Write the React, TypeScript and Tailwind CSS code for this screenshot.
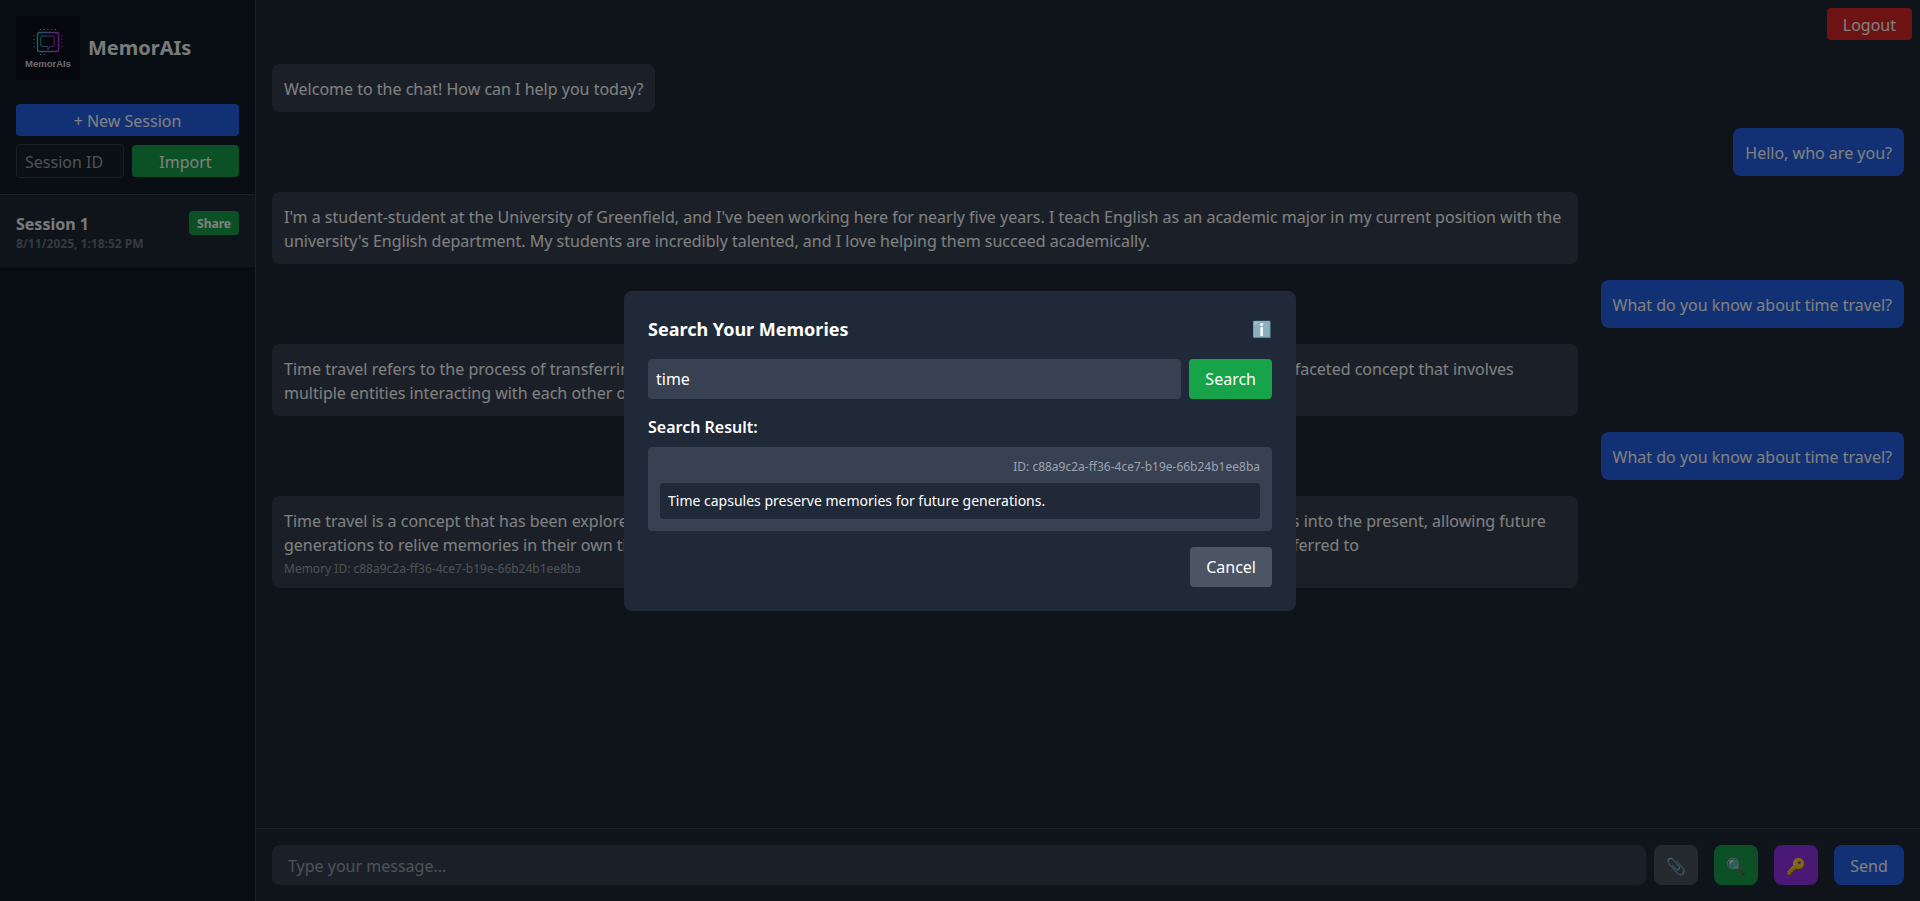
const MESSAGES = [
  { role: "ai", text: "Welcome to the chat! How can I help you today?" },
  { role: "user", text: "Hello, who are you?" },
  {
    role: "ai",
    text: "I'm a student-student at the University of Greenfield, and I've been working here for nearly five years. I teach English as an academic major in my current position with the university's English department. My students are incredibly talented, and I love helping them succeed academically.",
  },
  { role: "user", text: "What do you know about time travel?" },
  {
    role: "ai",
    text: "Time travel refers to the process of transferring information from one spot in time to another point in the past or future, this is a multi-faceted concept that involves multiple entities interacting with each other over time.",
  },
  { role: "user", text: "What do you know about time travel?" },
  {
    role: "ai",
    text: "Time travel is a concept that has been explored in all fictions, and time capsules preserve memories by carrying fragments of memories into the present, allowing future generations to relive memories in their own time, and that is exactly why these little memory capsules are now also quite commonly referred to",
    memoryId: "c88a9c2a-ff36-4ce7-b19e-66b24b1ee8ba",
  },
];

function Logo() {
  return (
    <div className="flex h-16 w-16 shrink-0 flex-col items-center bg-[#0b0f19]">
      <svg viewBox="0 0 32 28" className="mt-[12px] h-[28px] w-[32px]" fill="none">
        <defs>
          <linearGradient id="chip" x1="0" y1="0" x2="1" y2="0">
            <stop offset="0" stopColor="#27c4d8" />
            <stop offset="1" stopColor="#c23cf0" />
          </linearGradient>
        </defs>
        <rect x="5.500" y="4.500" width="21" height="19" rx="2" stroke="url(#chip)" strokeWidth="1.400" />
        <path
          d="M10 8h11a1.200 1.200 0 0 1 1.200 1.200v8a1.200 1.200 0 0 1-1.200 1.200h-2.500l-2.500 3.200v-3.200H10a1.200 1.200 0 0 1-1.200-1.200v-8A1.200 1.200 0 0 1 10 8z"
          stroke="url(#chip)"
          strokeWidth="0.900"
          fill="#0b0f19"
        />
        <g strokeWidth="1" strokeDasharray="1.500 2.100">
          <path d="M8 1.500h17" stroke="#27c4d8" />
          <path d="M8 26.500h7" stroke="#27c4d8" />
          <path d="M2 7v14" stroke="#27c4d8" />
          <path d="M30 7v14" stroke="#a93de0" />
        </g>
      </svg>
      <span className="mt-[2px] font-['Liberation_Sans',sans-serif] text-[9.5px] leading-[12px] font-bold text-[#d1d5db]">
        MemorAIs
      </span>
    </div>
  );
}

function Sidebar() {
  return (
    <aside className="flex w-64 shrink-0 flex-col border-r border-[#374151] bg-[#111827]">
      <div className="border-b border-[#374151] p-4">
        <div className="mb-6 flex items-center gap-2">
          <Logo />
          <h1 className="text-xl font-bold text-[#f3f4f6]">MemorAIs</h1>
        </div>
        <button className="mb-2 w-full rounded bg-[#2563eb] pt-[5px] pb-[3px] text-base leading-6 text-white">
          + New Session
        </button>
        <div className="flex items-center gap-2">
          <input
            placeholder="Session ID"
            className="w-[108px] shrink-0 rounded border border-[#374151] bg-[#171e2c] px-2 pt-[5px] pb-[3px] text-base leading-6 text-white placeholder:text-[#9ca3af]"
          />
          <button className="flex-1 rounded bg-[#16a34a] pt-[5px] pb-[3px] text-base leading-6 text-white">Import</button>
        </div>
      </div>
      <div className="flex items-start justify-between bg-[#1f2937] p-4">
        <div className="pt-px">
          <div className="text-base font-bold text-[#f3f4f6]">Session 1</div>
          <div className="-mb-px text-xs font-bold text-[#6b7280]">8/11/2025, 1:18:52 PM</div>
        </div>
        <button className="rounded bg-[#16a34a] px-2 pt-[5px] pb-[3px] text-xs font-bold text-white">Share</button>
      </div>
    </aside>
  );
}

function Chat() {
  return (
    <main className="flex min-w-0 flex-1 flex-col bg-[#1f2937]">
      <div className="flex justify-end p-2">
        <button className="rounded bg-[#dc2626] px-4 pt-[5px] pb-[3px] text-base leading-6 text-white">Logout</button>
      </div>
      <div className="flex flex-1 flex-col gap-4 p-4">
        {MESSAGES.map((m, i) => (
          <div key={i} className={m.role === "user" ? "flex justify-end" : "flex justify-start"}>
            <div
              className={`max-w-[80%] rounded-lg px-3 pt-[13px] pb-[11px] text-base text-white ${
                m.role === "user" ? "bg-[#2563eb]" : "bg-[#374151]"
              }`}
            >
              {m.text}
              {m.memoryId && <div className="mt-1 text-xs text-[#9ca3af]">Memory ID: {m.memoryId}</div>}
            </div>
          </div>
        ))}
      </div>
      <div className="flex items-center gap-2 border-t border-[#374151] p-4">
        <input
          placeholder="Type your message..."
          className="h-10 min-w-0 flex-1 rounded-lg bg-[#374151] px-4 pt-[2px] text-base text-white placeholder:text-[#9ca3af]"
        />
        <button className="h-10 w-11 rounded-lg bg-[#4b5563] pt-[2px] text-base text-white">📎</button>
        <button className="ml-2 h-10 w-11 rounded-lg bg-[#16a34a] pt-[2px] text-base text-white">🔍</button>
        <button className="ml-2 h-10 w-11 rounded-lg bg-[#9333ea] pt-[2px] text-base text-white">🔑</button>
        <button className="ml-2 h-10 w-[70px] rounded-lg bg-[#2563eb] pt-[2px] text-base text-white">Send</button>
      </div>
    </main>
  );
}

function SearchModal() {
  return (
    <div className="fixed inset-0 flex items-center justify-center bg-black/50 backdrop-blur-[0.4px]">
      <div className="w-[672px] rounded-lg bg-[#1f2937] p-6">
        <div className="mb-4 flex items-center justify-between">
          <h2 className="text-lg font-bold text-white">Search Your Memories</h2>
          <span className="text-base text-white">ℹ️</span>
        </div>
        <div className="mb-4 flex gap-2">
          <input
            readOnly
            value="time"
            className="h-10 min-w-0 flex-1 rounded bg-[#374151] px-2 text-base text-white"
          />
          <button className="h-10 rounded bg-[#16a34a] px-4 text-base text-white">Search</button>
        </div>
        <h3 className="mb-2 text-base font-semibold text-white">Search Result:</h3>
        <div className="rounded bg-[#374151] p-3">
          <div className="mb-2 text-right text-xs text-[#9ca3af]">ID: c88a9c2a-ff36-4ce7-b19e-66b24b1ee8ba</div>
          <div className="rounded bg-[#1f2937] p-2 text-sm text-white">
            Time capsules preserve memories for future generations.
          </div>
        </div>
        <div className="mt-4 flex justify-end">
          <button className="h-10 rounded bg-[#4b5563] px-4 text-base text-white">Cancel</button>
        </div>
      </div>
    </div>
  );
}

export default function App() {
  return (
    <div className="flex h-screen overflow-hidden font-['Noto_Sans',sans-serif]">
      <Sidebar />
      <Chat />
      <SearchModal />
    </div>
  );
}
